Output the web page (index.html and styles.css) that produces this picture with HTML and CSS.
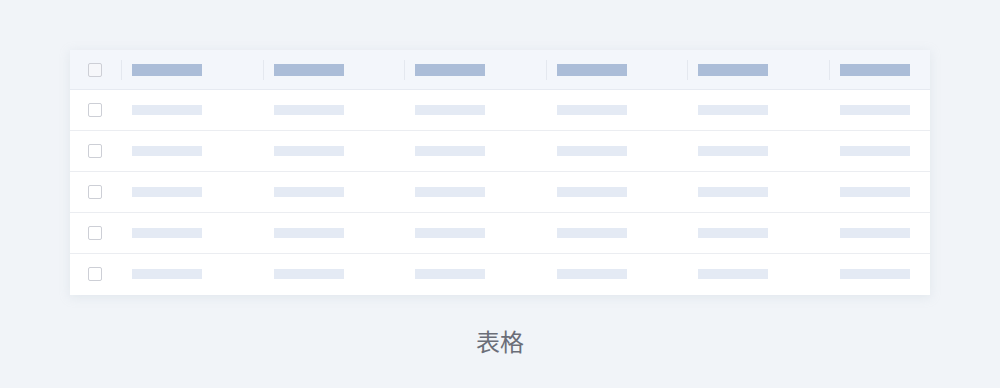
FILE: index.html
```html
<!DOCTYPE html>
<html lang="zh">
<head>
<meta charset="utf-8">
<link rel="stylesheet" href="styles.css">
</head>
<body>
<div class="page">
  <div class="table">
    <div class="row head">
      <div class="cell check"><span class="box"></span></div>
      <div class="cell"><span class="bar"></span></div>
      <div class="cell"><span class="bar"></span></div>
      <div class="cell"><span class="bar"></span></div>
      <div class="cell"><span class="bar"></span></div>
      <div class="cell"><span class="bar"></span></div>
      <div class="cell"><span class="bar"></span></div>
    </div>
    <div class="row">
      <div class="cell check"><span class="box"></span></div>
      <div class="cell"><span class="bar"></span></div>
      <div class="cell"><span class="bar"></span></div>
      <div class="cell"><span class="bar"></span></div>
      <div class="cell"><span class="bar"></span></div>
      <div class="cell"><span class="bar"></span></div>
      <div class="cell"><span class="bar"></span></div>
    </div>
    <div class="row">
      <div class="cell check"><span class="box"></span></div>
      <div class="cell"><span class="bar"></span></div>
      <div class="cell"><span class="bar"></span></div>
      <div class="cell"><span class="bar"></span></div>
      <div class="cell"><span class="bar"></span></div>
      <div class="cell"><span class="bar"></span></div>
      <div class="cell"><span class="bar"></span></div>
    </div>
    <div class="row">
      <div class="cell check"><span class="box"></span></div>
      <div class="cell"><span class="bar"></span></div>
      <div class="cell"><span class="bar"></span></div>
      <div class="cell"><span class="bar"></span></div>
      <div class="cell"><span class="bar"></span></div>
      <div class="cell"><span class="bar"></span></div>
      <div class="cell"><span class="bar"></span></div>
    </div>
    <div class="row">
      <div class="cell check"><span class="box"></span></div>
      <div class="cell"><span class="bar"></span></div>
      <div class="cell"><span class="bar"></span></div>
      <div class="cell"><span class="bar"></span></div>
      <div class="cell"><span class="bar"></span></div>
      <div class="cell"><span class="bar"></span></div>
      <div class="cell"><span class="bar"></span></div>
    </div>
    <div class="row">
      <div class="cell check"><span class="box"></span></div>
      <div class="cell"><span class="bar"></span></div>
      <div class="cell"><span class="bar"></span></div>
      <div class="cell"><span class="bar"></span></div>
      <div class="cell"><span class="bar"></span></div>
      <div class="cell"><span class="bar"></span></div>
      <div class="cell"><span class="bar"></span></div>
    </div>
  </div>
  <div class="caption">表格</div>
</div>
</body>
</html>
```

FILE: styles.css
```css
html, body {
  margin: 0;
  padding: 0;
  background: #f1f4f8;
}
.page {
  width: 1000px;
  height: 388px;
  padding-top: 50px;
  box-sizing: border-box;
  display: flex;
  flex-direction: column;
  align-items: center;
}
.table {
  width: 860px;
  padding-bottom: 1px;
  background: #ffffff;
  box-shadow: 0 2px 10px rgba(180, 190, 205, 0.25);
}
.row {
  display: grid;
  grid-template-columns: 51px 142px 141px 142px 141px 142px 1fr;
  height: 40px;
  border-bottom: 1px solid #ebedf1;
}
.row:last-child {
  border-bottom: none;
}
.cell {
  display: flex;
  align-items: center;
  padding-left: 11px;
}
.cell.check {
  padding-left: 18px;
}
.box {
  width: 14px;
  height: 14px;
  box-sizing: border-box;
  border: 1px solid #cdcfd6;
  border-radius: 2px;
  background: #fff;
}
.bar {
  width: 70px;
  height: 10px;
  background: #e4eaf4;
}
.head {
  height: 39px;
  background: #f3f6fb;
  border-bottom: 1px solid #e6eaf1;
}
.head .bar {
  height: 12px;
  background: #abbdd8;
}
.head .cell {
  position: relative;
}
.head .cell:not(.check)::before {
  content: "";
  position: absolute;
  left: 0;
  top: 10px;
  width: 1px;
  height: 20px;
  background: #e4e8ef;
}
.head .box {
  background: #f6f7fa;
}
.caption {
  margin-top: 30px;
  font-family: "Noto Sans CJK SC", "Noto Sans", sans-serif;
  font-size: 24px;
  line-height: 32px;
  color: #6b6e78;
}
```
